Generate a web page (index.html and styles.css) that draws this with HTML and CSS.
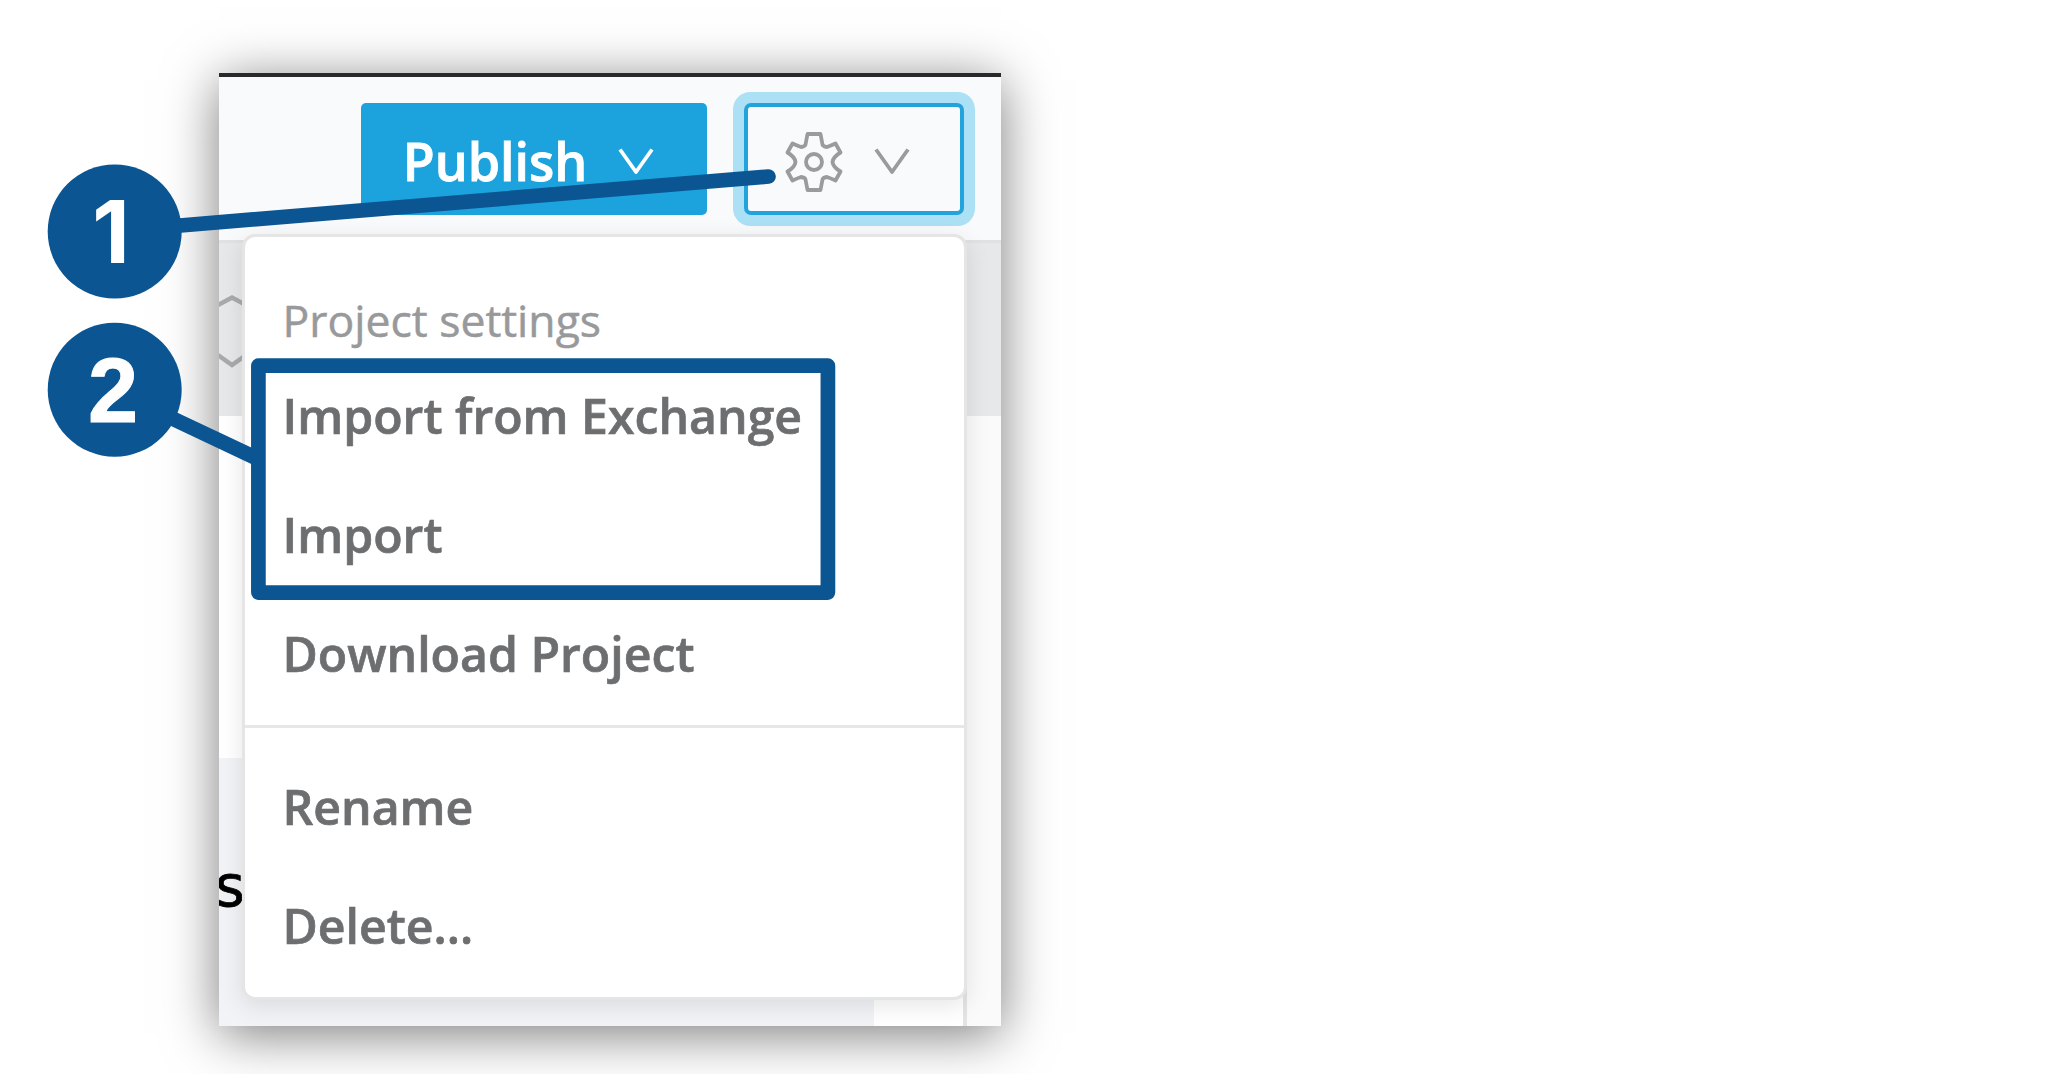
FILE: index.html
```html
<!DOCTYPE html>
<html lang="en">
<head>
<meta charset="utf-8">
<title>Project settings</title>
<link rel="stylesheet" href="styles.css">
</head>
<body>
<main class="figure">
  <section class="panel">
    <header class="toolbar">
      <button class="button publish"><span>Publish</span>
        <svg class="chevron" viewBox="0 0 36 26"><path d="M2 1.5 18 24 34 1.5"/></svg>
      </button>
      <button class="button settings">
        <svg class="gear" viewBox="-30 -31 60 62">
          <path d="M-6.5-28H6.5L8.5-17.5Q9-15.5 13-15Q16-16 21.5-18.5L26.5-9.5Q19-5 18.5 0Q19 5 26.5 9.5L21.5 18.5Q16 16 13 15Q9 15.5 8.5 17.5L6.5 28H-6.5L-8.5 17.5Q-9 15.5-13 15Q-16 16-21.5 18.5L-26.5 9.5Q-19 5-18.5 0Q-19-5-26.5-9.5L-21.5-18.5Q-16-16-13-15Q-9-15.5-8.5-17.5Z"/>
          <circle r="8"/>
        </svg>
        <svg class="chevron" viewBox="0 0 36 26"><path d="M2 1.5 18 24 34 1.5"/></svg>
      </button>
    </header>
    <div class="subbar">
      <svg class="hexagon" viewBox="0 0 26 80"><path d="M-1 13 13 5.5 27 13M-1 63 13 73 27 63"/></svg>
    </div>
    <div class="content">
      <div class="main-column">
        <div class="blank"></div>
        <div class="lower"><div class="tile">s</div><div class="gap"></div></div>
      </div>
      <div class="rail"></div>
    </div>
    <nav class="menu">
      <div class="group first">
        <h2 class="menu-title">Project settings</h2>
        <a class="item">Import from Exchange</a>
        <a class="item">Import</a>
        <a class="item">Download Project</a>
      </div>
      <div class="group second">
        <a class="item">Rename</a>
        <a class="item">Delete...</a>
      </div>
    </nav>
  </section>
  <svg class="callouts" viewBox="0 0 1100 1074">
    <path d="M115 231 768.5 176.5M115 391.3 256 458"/>
    <rect x="258.4" y="365.6" width="569.5" height="227"/>
    <circle cx="114.7" cy="231.5" r="67"/>
    <circle cx="114.7" cy="389.7" r="67"/>
  </svg>
  <span class="number one">1</span>
  <span class="number two">2</span>
</main>
</body>
</html>
```
FILE: styles.css
```css
* { box-sizing: border-box; }
body {
  margin: 0;
  background: #fff;
  font-family: "Open Sans", "Noto Sans", sans-serif;
}
.figure {
  position: relative;
  width: 2048px;
  height: 1074px;
  padding: 73px 0 0 219px;
  overflow: hidden;
}
.panel {
  position: relative;
  display: flex;
  flex-direction: column;
  width: 781.7px;
  height: 953px;
  border-top: 4px solid #29292b;
  background: #fff;
  box-shadow: 0 8px 50px rgba(0, 0, 0, .52);
}
.toolbar {
  display: flex;
  align-items: flex-start;
  justify-content: flex-end;
  gap: 37px;
  height: 166px;
  padding: 26px 37px 0 0;
  border-bottom: 3px solid #e0e1e3;
  background: #f9fafc;
}
.button {
  display: flex;
  align-items: center;
  height: 112px;
  margin: 0;
  border: 0;
  border-radius: 5px;
  font: 600 52px/1 "Open Sans", sans-serif;
}
.publish {
  width: 346.5px;
  padding: 0 0 0 42px;
  gap: 32px;
  background: #1ca3de;
  color: #fff;
  -webkit-text-stroke: .8px;
}
.publish span { width: 183px; padding-top: 4px; white-space: nowrap; }
.settings {
  width: 219.5px;
  padding: 6px 0 0 36px;
  gap: 30px;
  border: 4px solid #23a2dc;
  border-radius: 7px;
  background: #f9fafc;
  color: #9a9b9d;
  box-shadow: 0 0 0 11px #ace1f5;
}
.chevron { flex: none; width: 36px; height: 26px; }
.publish .chevron { margin-top: 3px; }
.settings .chevron { margin-top: -3px; }
.gear { flex: none; width: 60px; height: 62px; }
.chevron path, .gear path, .gear circle {
  fill: none;
  stroke: currentColor;
  stroke-width: 3.8;
  stroke-linejoin: round;
}
.subbar { height: 172.5px; padding-top: 49px; background: #e7e8ea; }
.hexagon { display: block; width: 26px; height: 80px; }
.hexagon path { fill: none; stroke: #a9aaac; stroke-width: 4.5; }
.content { display: flex; flex: 1; }
.main-column { display: flex; flex: 1; flex-direction: column; }
.blank { height: 342.5px; }
.lower { display: flex; flex: 1; }
.tile {
  width: 655px;
  padding-top: 98px;
  overflow: hidden;
  background: #f2f3f6;
  color: #000;
  font: 57px/60px "DejaVu Sans", sans-serif;
  text-indent: -4px;
  -webkit-text-stroke: .8px;
}
.gap { flex: 1; }
.rail { width: 38px; border-left: 4px solid #e4e4e4; background: #fafafa; }
.menu {
  position: absolute;
  top: 157px;
  left: 22.5px;
  width: 725.5px;
  height: 766px;
  border: 3.5px solid #e5e5e5;
  border-radius: 13px;
  background: #fff;
  box-shadow: 0 6px 24px rgba(0, 0, 0, .1);
}
.group { display: flex; flex-direction: column; padding-left: 38px; }
.first { height: 491px; padding-top: 47px; border-bottom: 3px solid #e7e7e7; }
.second { padding-top: 19px; }
.menu-title {
  margin: 0;
  color: #98999b;
  font-size: 44.5px;
  font-weight: 400;
  line-height: 72px;
  -webkit-text-stroke: .5px;
}
.item {
  color: #6d6e70;
  font-size: 48.2px;
  font-weight: 600;
  line-height: 119px;
  -webkit-text-stroke: .7px;
}
.callouts { position: absolute; top: 0; left: 0; width: 1100px; height: 1074px; }
.callouts path, .callouts rect {
  fill: none;
  stroke: #0b5592;
  stroke-width: 14.7;
  stroke-linecap: round;
  stroke-linejoin: round;
}
.callouts circle { fill: #0b5592; }
.number {
  position: absolute;
  left: 63px;
  width: 100px;
  color: #fff;
  font: 700 90px/100px "Liberation Sans", Arial, sans-serif;
  text-align: center;
}
.one { top: 182px; left: 61px; font-family: Inter, sans-serif; font-size: 87px; }
.two { top: 341px; -webkit-text-stroke: 1px; }
```
